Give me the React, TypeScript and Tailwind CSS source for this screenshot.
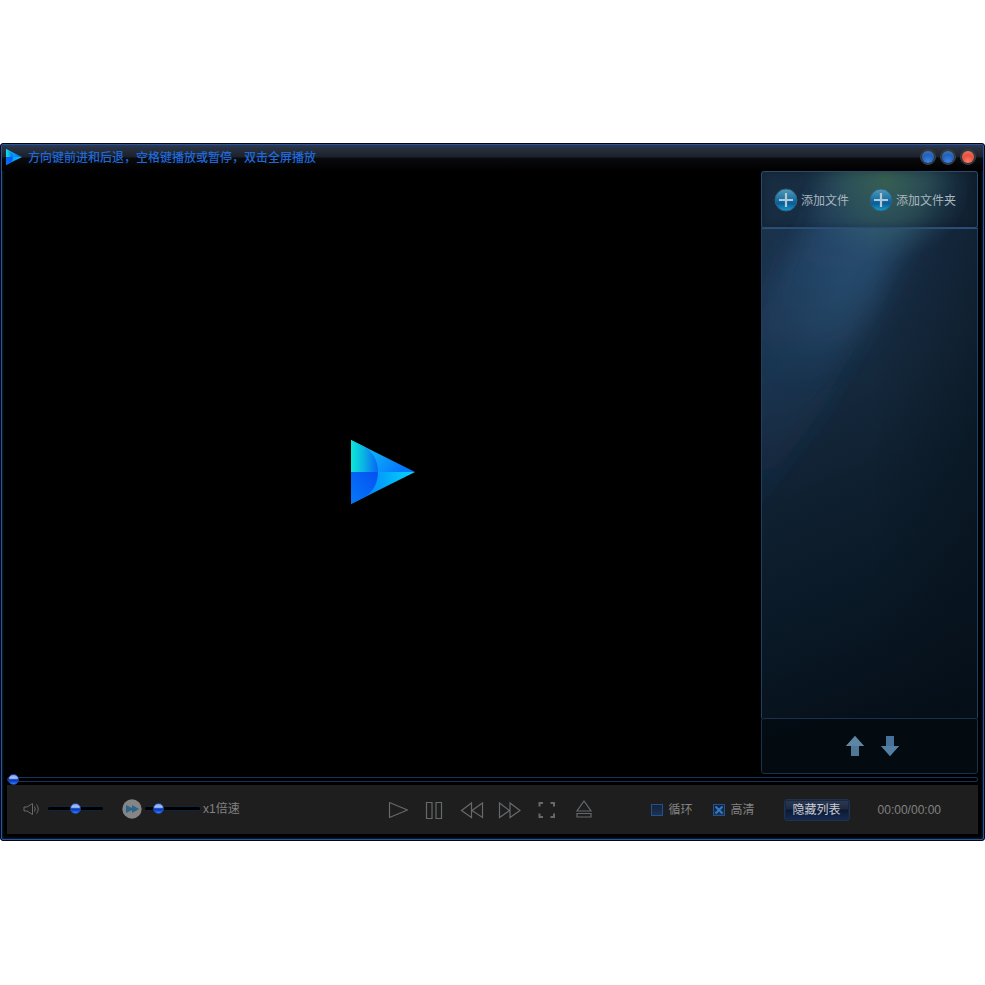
import React, { useState } from 'react';

const FONT =
  'font-["Liberation_Sans","Noto_Sans_CJK_SC",sans-serif]';

const THUMB =
  '[&::-webkit-slider-thumb]:appearance-none [&::-webkit-slider-thumb]:w-[11px] [&::-webkit-slider-thumb]:h-[11px] [&::-webkit-slider-thumb]:rounded-full [&::-webkit-slider-thumb]:border [&::-webkit-slider-thumb]:border-[#2a4a94] [&::-webkit-slider-thumb]:bg-[linear-gradient(180deg,#7fa4e8_0%,#a9c4f5_35%,#3a6fe0_48%,#0a2fb4_52%,#0c4be0_75%,#2f8dff_100%)]';

function PlayLogo({ id, className }: { id: string; className: string }) {
  return (
    <svg viewBox="0 0 64 64" className={className} aria-hidden="true">
      <defs>
        <linearGradient id={`${id}-top`} x1="0" y1="0" x2="1" y2="0.4">
          <stop offset="0.2" stopColor="#12c4f2" />
          <stop offset="1" stopColor="#0577ff" />
        </linearGradient>
        <linearGradient id={`${id}-bottom`} x1="0" y1="0" x2="1" y2="0">
          <stop offset="0.35" stopColor="#0494fa" />
          <stop offset="1" stopColor="#04d8fa" />
        </linearGradient>
        <linearGradient id={`${id}-arc`} x1="0" y1="0" x2="1" y2="0">
          <stop offset="0" stopColor="#0ce8d8" />
          <stop offset="0.45" stopColor="#0bb5e4" />
          <stop offset="1" stopColor="#0666f5" />
        </linearGradient>
        <linearGradient id={`${id}-deep`} x1="0" y1="1" x2="1" y2="0">
          <stop offset="0" stopColor="#0678fa" />
          <stop offset="1" stopColor="#0550f0" />
        </linearGradient>
      </defs>
      <path d="M0 0 64 32H0Z" fill={`url(#${id}-top)`} />
      <path d="M0 64 64 32H0Z" fill={`url(#${id}-bottom)`} />
      <path d="M0 0 14 7C22 12 27 21 27 32H0Z" fill={`url(#${id}-arc)`} />
      <path d="M0 64 14 57C22 52 27 43 27 32H0Z" fill={`url(#${id}-deep)`} />
    </svg>
  );
}

function WindowButton({ label, tone }: { label: string; tone: 'blue' | 'red' }) {
  return (
    <button
      type="button"
      aria-label={label}
      className="w-4 h-4 rounded-full bg-[#30363e] border border-[#3a3f46] flex items-center justify-center"
    >
      <span
        className={
          tone === 'red'
            ? 'w-3 h-3 rounded-full bg-[radial-gradient(circle_at_50%_85%,#ff7a66,#e4513e_50%,#f08070_100%)]'
            : 'w-3 h-3 rounded-full bg-[radial-gradient(circle_at_50%_85%,#3a83e8,#2361b8_55%,#4a80c0_100%)]'
        }
      />
    </button>
  );
}

function TitleBar() {
  return (
    <header className="h-[26px] shrink-0 flex items-center pl-1 pr-[7px] pb-0.5 bg-[linear-gradient(180deg,#263a60_0px,#29313f_3px,#1b212b_12px,#090a0e_13px,#000_26px)]">
      <PlayLogo id="small" className="w-4 h-4 mr-1.5" />
      <h1 className="pt-px text-xs font-medium text-[#1f68d8] whitespace-nowrap">
        方向键前进和后退，空格键播放或暂停，双击全屏播放
      </h1>
      <div className="ml-auto flex gap-1">
        <WindowButton label="最小化" tone="blue" />
        <WindowButton label="最大化" tone="blue" />
        <WindowButton label="关闭" tone="red" />
      </div>
    </header>
  );
}

// Light rays falling from the top right across the playlist
function PanelBackdrop() {
  return (
    <svg
      viewBox="0 0 217 603"
      preserveAspectRatio="none"
      className="absolute inset-0 w-full h-full"
      aria-hidden="true"
    >
      <defs>
        <linearGradient id="bg-base" x1="0" y1="0" x2="0.15" y2="1">
          <stop offset="0" stopColor="#1b334b" />
          <stop offset="0.2" stopColor="#1a304a" />
          <stop offset="0.4" stopColor="#15293d" />
          <stop offset="0.58" stopColor="#0e1f2f" />
          <stop offset="0.8" stopColor="#091724" />
          <stop offset="1" stopColor="#050e17" />
        </linearGradient>
        <linearGradient id="bg-ray" x1="0" y1="0" x2="0" y2="1">
          <stop offset="0" stopColor="#33608a" stopOpacity="0.6" />
          <stop offset="0.4" stopColor="#28527c" stopOpacity="0.35" />
          <stop offset="0.75" stopColor="#1c3f6c" stopOpacity="0.18" />
          <stop offset="1" stopColor="#1c3f6c" stopOpacity="0" />
        </linearGradient>
        <linearGradient id="bg-right" x1="0" y1="0" x2="1" y2="0">
          <stop offset="0" stopColor="#061019" stopOpacity="0" />
          <stop offset="1" stopColor="#061019" stopOpacity="0.4" />
        </linearGradient>
        <radialGradient id="bg-green">
          <stop offset="0" stopColor="#43735f" stopOpacity="0.95" />
          <stop offset="0.5" stopColor="#3c6b65" stopOpacity="0.55" />
          <stop offset="1" stopColor="#2a5570" stopOpacity="0" />
        </radialGradient>
        <filter id="bg-soft" x="-50%" y="-50%" width="200%" height="200%">
          <feGaussianBlur stdDeviation="12" />
        </filter>
        <filter id="bg-softer" x="-50%" y="-50%" width="200%" height="200%">
          <feGaussianBlur stdDeviation="22" />
        </filter>
      </defs>
      <rect width="217" height="603" fill="url(#bg-base)" />
      <path d="M100 -40H200L150 60 108 145 62 235 -10 340 -60 400V230Z" fill="url(#bg-ray)" filter="url(#bg-soft)" />
      <path d="M100 -20H180L145 65 95 150 30 190Z" fill="#336488" opacity="0.35" filter="url(#bg-softer)" />
      <rect x="110" width="107" height="603" fill="url(#bg-right)" />
      <ellipse cx="124" cy="8" rx="86" ry="84" fill="url(#bg-green)" />
    </svg>
  );
}

function AddButton({ label, id }: { label: string; id: string }) {
  return (
    <button type="button" className="flex items-center gap-[3px] text-xs text-[#a9b5bf] whitespace-nowrap">
      <svg viewBox="0 0 24 24" className="w-6 h-6" aria-hidden="true">
        <defs>
          <linearGradient id={id} x1="0" y1="0" x2="0" y2="1">
            <stop offset="0" stopColor="#559ab4" />
            <stop offset="0.4" stopColor="#2279a8" />
            <stop offset="0.65" stopColor="#0a5c98" />
            <stop offset="1" stopColor="#149fca" />
          </linearGradient>
        </defs>
        <circle cx="12" cy="12" r="11" fill={`url(#${id})`} stroke="#2f5f80" />
        <path d="M12 5V19M5 12H19" stroke="#b3c8d4" strokeWidth="2.200" />
      </svg>
      <span className="pt-0.5">{label}</span>
    </button>
  );
}

function Playlist() {
  return (
    <aside className="relative w-[217px] shrink-0 flex flex-col rounded-[3px] overflow-hidden">
      <PanelBackdrop />
      <div className="relative h-[57px] shrink-0 flex items-center gap-5 pl-3 pt-px bg-[#10181c]/20 border border-[#294c70] rounded-[3px] shadow-[inset_0_0_10px_rgba(0,0,0,0.25)]">
        <AddButton id="add-file" label="添加文件" />
        <AddButton id="add-folder" label="添加文件夹" />
      </div>
      <ul aria-label="播放列表" className="relative flex-1 border-x border-t border-[#1f3f63] border-t-[#2a4f7c]" />
      <div className="relative h-14 shrink-0 flex items-center justify-center gap-[15px] pl-1.5 bg-[#02080c]/60 border border-[#1b304c] rounded-[3px]">
        <button type="button" aria-label="上移">
          <svg viewBox="0 0 20 22" className="w-5 h-[22px]" aria-hidden="true">
            <path d="M10 1 19 11H14V21H6V11H1Z" fill="#4f7897" />
            <path d="M10 1 19 11H1Z" fill="#5d86a4" />
          </svg>
        </button>
        <button type="button" aria-label="下移">
          <svg viewBox="0 0 20 22" className="w-5 h-[22px]" aria-hidden="true">
            <path d="M10 21 1 11H6V1H14V11H19Z" fill="#46719a" />
            <path d="M10 21 1 11H19Z" fill="#547fa3" />
          </svg>
        </button>
      </div>
    </aside>
  );
}

function Slider({ label, value }: { label: string; value: number }) {
  return (
    <input
      type="range"
      aria-label={label}
      defaultValue={value}
      className={`appearance-none w-[55px] h-[11px] bg-transparent [&::-webkit-slider-runnable-track]:h-[5px] [&::-webkit-slider-runnable-track]:bg-black [&::-webkit-slider-runnable-track]:border-y [&::-webkit-slider-runnable-track]:border-[#10243f] [&::-webkit-slider-runnable-track]:rounded-xs [&::-webkit-slider-thumb]:-mt-1 ${THUMB}`}
    />
  );
}

function IconButton({ label, children }: { label: string; children: React.ReactNode }) {
  return (
    <button type="button" aria-label={label}>
      <svg
        viewBox="0 0 24 24"
        className="w-6 h-6"
        fill="none"
        stroke="#66686a"
        strokeWidth="1.2"
        aria-hidden="true"
      >
        {children}
      </svg>
    </button>
  );
}

function CheckOption({ label, initial }: { label: string; initial: boolean }) {
  const [checked, setChecked] = useState(initial);
  return (
    <label className="flex items-center gap-1.5 text-xs text-[#828282] whitespace-nowrap">
      <span className="relative w-3 h-3">
        <input
          type="checkbox"
          checked={checked}
          onChange={(e) => setChecked(e.target.checked)}
          className="block appearance-none w-3 h-3 border border-[#235090] bg-[linear-gradient(180deg,#14233c,#1d3150)]"
        />
        {checked && (
          <svg viewBox="0 0 12 12" className="absolute inset-0 w-3 h-3 pointer-events-none" aria-hidden="true">
            <path d="M2.500 2.500 9.500 9.500M9.500 2.500 2.500 9.500" stroke="#2f7cc4" strokeWidth="2" />
          </svg>
        )}
      </span>
      {label}
    </label>
  );
}

function Controls() {
  return (
    <footer className="h-[49px] shrink-0 flex items-center bg-[#1e1e1e] pl-4 pr-[37px]">
      <div className="flex-1 flex items-center pb-0.5">
        <button type="button" aria-label="静音">
          <svg viewBox="0 0 17 14" className="w-[17px] h-3.5" fill="none" stroke="#66686a" aria-hidden="true">
            <path d="M1 5H4L9.500 1.500V12.500L4 9H1Z" />
            <path d="M11.500 4.500Q13 7 11.500 9.500M13.500 2.500Q17 7 13.500 11.500" />
          </svg>
        </button>
        <div className="ml-2 flex items-center">
          <Slider label="音量" value={50} />
        </div>
        <button type="button" aria-label="倍速" className="ml-[19px]">
          <svg viewBox="0 0 20 20" className="w-5 h-5" aria-hidden="true">
            <circle cx="10" cy="10" r="9.700" fill="#858585" />
            <path d="M4 6 10 9V6L17 10 10 14V11L4 14Z" fill="#2b648c" />
          </svg>
        </button>
        <div className="ml-[3px] flex items-center">
          <Slider label="播放速度" value={18} />
        </div>
        <span className="ml-[3px] text-xs text-[#828282] whitespace-nowrap">x1倍速</span>
      </div>

      <div className="flex items-center gap-[13px]">
        <IconButton label="播放">
          <path d="M3.500 4.500V19.500L21.500 12Z" strokeLinejoin="round" />
        </IconButton>
        <IconButton label="暂停">
          <path d="M3.500 4.500H9V20.500H3.500ZM13 4.500H18.500V20.500H13Z" />
        </IconButton>
        <IconButton label="快退">
          <path d="M11.500 5V19.500L1.500 12.500ZM22.500 5V19.500L12 12.500Z" />
        </IconButton>
        <IconButton label="快进">
          <path d="M2.500 5V19.500L12.500 12.500ZM13 5V19.500L23 12.500Z" />
        </IconButton>
        <IconButton label="全屏">
          <path d="M5.500 8.500V5H9M16.500 5H20V8.500M20 15.500V19H16.500M9 19H5.500V15.500" strokeWidth="2" />
        </IconButton>
        <IconButton label="打开">
          <path d="M13 3 20 13H6ZM6 15.500H20V19H6Z" />
        </IconButton>
      </div>

      <div className="ml-14 flex items-center">
        <CheckOption label="循环" initial={false} />
        <div className="ml-5">
          <CheckOption label="高清" initial />
        </div>
        <button
          type="button"
          className="ml-[29px] h-[22px] w-[66px] rounded-[3px] border border-[#22324e] text-xs text-[#c8ced8] whitespace-nowrap bg-[linear-gradient(180deg,#2c3a50_0%,#1d2940_45%,#0c1830_50%,#142c54_100%)] shadow-[inset_0_0_0_1px_#152647]"
        >
          隐藏列表
        </button>
        <time className="ml-7 text-xs text-[#828282]">00:00/00:00</time>
      </div>
    </footer>
  );
}

export default function App() {
  return (
    <div className={`min-h-screen flex flex-col bg-white pt-[143px] pb-36 ${FONT}`}>
      <main className="flex-1 flex flex-col rounded-[3px] border border-[#020817] bg-black">
        <div className="flex-1 flex flex-col rounded-[2px] border border-[#2c5496] shadow-[inset_0_0_3px_#1b3a70]">
          <TitleBar />
          <div className="flex-1 flex px-[5px]">
            <section aria-label="视频" className="flex-1 flex items-center justify-center pr-0.5 pb-0.5">
              <PlayLogo id="large" className="w-16 h-16" />
            </section>
            <Playlist />
          </div>
          <div className="px-[5px] h-[11px] shrink-0 flex items-center">
            <input
              type="range"
              aria-label="播放进度"
              defaultValue={0}
              className={`appearance-none w-full h-[11px] bg-transparent [&::-webkit-slider-runnable-track]:h-[5px] [&::-webkit-slider-runnable-track]:border [&::-webkit-slider-runnable-track]:border-[#17335c] [&::-webkit-slider-runnable-track]:rounded-xs [&::-webkit-slider-thumb]:-mt-1 ${THUMB}`}
            />
          </div>
          <div className="px-[5px] pb-[5px]">
            <Controls />
          </div>
        </div>
      </main>
    </div>
  );
}
